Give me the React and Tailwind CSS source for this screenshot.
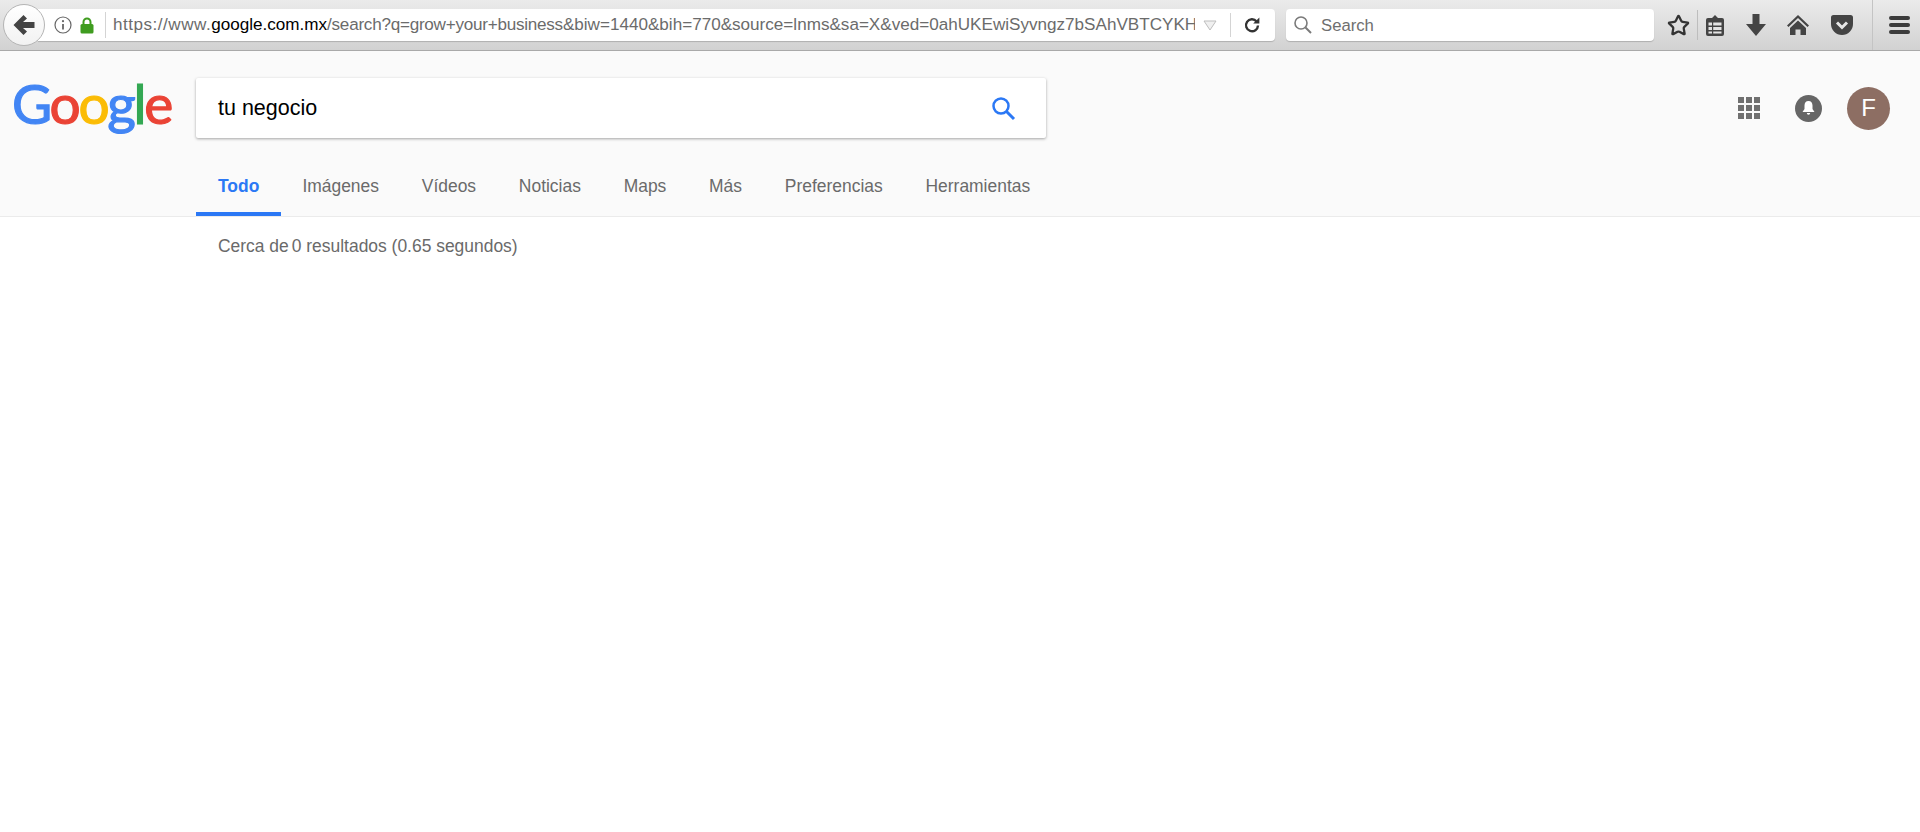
import { Star } from 'lucide-react';

const tabs = ['Imágenes', 'Vídeos', 'Noticias', 'Maps', 'Más', 'Preferencias', 'Herramientas'];

function BrowserBar() {
  return (
    <div className="flex h-[51px] items-center border-b border-[#a9a9a9] bg-gradient-to-b from-[#ebebeb] to-[#d2d2d2] pl-[3px]">
      {/* Back button */}
      <button className="z-10 -mr-[7px] flex h-[42px] w-[42px] shrink-0 items-center justify-center rounded-full border border-[#b5b5b5] bg-gradient-to-b from-white to-[#f2f2f2]">
        <svg width="22" height="20" viewBox="0 0 22 20" fill="#444">
          <path d="M10.5 0 L14 3.5 L10 7 H21.5 V13 H10 L14 16.500 L10.5 20 L0.5 10 Z" />
        </svg>
      </button>

      {/* URL bar */}
      <div className="flex h-[32px] w-[1237px] shrink-0 items-center rounded-r-[4px] bg-white pl-[16px] shadow-[0_1px_1px_rgba(0,0,0,0.18)]">
        <svg width="18" height="18" viewBox="0 0 18 18" fill="none" stroke="#666" className="shrink-0">
          <circle cx="9" cy="9" r="8" strokeWidth="1.2" />
          <circle cx="9" cy="5.2" r="1.1" fill="#666" stroke="none" />
          <path d="M9 8v5.5" strokeWidth="1.8" />
        </svg>
        <svg width="14" height="17" viewBox="0 0 14 17" className="ml-[8px] shrink-0">
          <path d="M3.5 8V5a3.5 3.5 0 0 1 7 0v3" fill="none" stroke="#3f9c1f" strokeWidth="2" />
          <rect x="0.5" y="7" width="13" height="9.5" rx="1.5" fill="#3f9c1f" />
        </svg>
        <div className="ml-[11px] h-[26px] w-px shrink-0 bg-[#d4d4d4]" />
        <div className="ml-[7px] w-[1082px] shrink-0 overflow-hidden whitespace-nowrap font-['Liberation_Sans',sans-serif] text-[17.1px] leading-[20px] text-[#6b6b6b]">
          <span className="tracking-[0.5px]">https://www.</span>
          <span className="text-black">google.com.mx</span>
          <span className="tracking-[-0.25px]">/search?q=grow+your+business</span>
          &amp;biw=1440&amp;bih=770&amp;source=lnms&amp;sa=X&amp;ved=0ahUKEwiSyvngz7bSAhVBTCYKHQ
        </div>
        <svg width="14" height="11" viewBox="0 0 14 11" className="ml-[8px] shrink-0">
          <path d="M1 1h12L7 10Z" fill="#f0f0f0" stroke="#bdbdbd" />
        </svg>
        <div className="ml-[13px] h-[24px] w-px shrink-0 bg-[#d4d4d4]" />
        <svg width="18" height="18" viewBox="0 0 18 18" fill="none" className="ml-[12px] shrink-0">
          <path d="M13.6 5.4A6 6 0 1 0 15 9.5" stroke="#333" strokeWidth="2.4" />
          <path d="M10.2 7.4 L16.4 7.4 L16.4 1.4 Z" fill="#333" />
        </svg>
      </div>

      {/* Search bar */}
      <div className="ml-[11px] flex h-[32px] w-[368px] shrink-0 items-center rounded-[4px] bg-white pl-[7px] shadow-[0_1px_1px_rgba(0,0,0,0.18)]">
        <svg width="20" height="20" viewBox="0 0 20 20" fill="none" stroke="#7a7a7a" strokeWidth="1.6" className="shrink-0">
          <circle cx="8" cy="8" r="6" />
          <path d="M12.5 12.5 18 18" strokeWidth="2" />
        </svg>
        <span className="ml-[8px] pt-[1px] font-['Liberation_Sans',sans-serif] text-[16.7px] text-[#6f6f6f]">Search</span>
      </div>

      {/* Toolbar icons */}
      <Star size={23} strokeWidth={2.4} color="#333" className="ml-[13px] shrink-0" />
      <div className="ml-[7px] h-[30px] w-px shrink-0 bg-[#bdbdbd]" />
      <svg width="20" height="23" viewBox="0 0 20 23" className="ml-[7px] shrink-0">
        <path d="M3 4h4l3-3 3 3h4a2 2 0 0 1 2 2v14a2 2 0 0 1-2 2H3a2 2 0 0 1-2-2V6a2 2 0 0 1 2-2Z" fill="#444" />
        <path d="M3.5 8.5h13v3h-13zM3.5 13h13v3h-13zM3.5 17.500h13v2h-13z" fill="#e4e4e4" />
        <path d="M7 7.500h1.200v12.500H7z" fill="#444" />
      </svg>
      <svg width="20" height="22" viewBox="0 0 20 22" fill="#444" className="ml-[21px] shrink-0">
        <path d="M6.500 0h7v10H20L10 22 0 10h6.500Z" />
      </svg>
      <svg width="22" height="22" viewBox="0 0 22 22" fill="#444" className="ml-[21px] shrink-0">
        <path d="M11 1 22 11.500l-1.500 1.500L11 4 1.500 13 0 11.500Z" />
        <path d="M11 6.500 19 14v7h-5.500v-5.500h-5V21H3v-7Z" />
      </svg>
      <svg width="22" height="22" viewBox="0 0 22 22" className="ml-[22px] shrink-0">
        <path d="M2.500 1h17A2.500 2.500 0 0 1 22 3.500V10A11 11 0 0 1 0 10V3.500A2.500 2.500 0 0 1 2.500 1Z" fill="#444" />
        <path d="M6 8.500l5 5 5-5" fill="none" stroke="#e6e6e6" strokeWidth="3" />
      </svg>
      <div className="ml-[19px] h-[50px] w-px shrink-0 bg-[#c4c4c4]" />
      <div className="ml-[16px] flex w-[21px] shrink-0 flex-col gap-[3px]">
        <div className="h-[4px] rounded-full bg-[#3c3c3c]" />
        <div className="h-[4px] rounded-full bg-[#3c3c3c]" />
        <div className="h-[4px] rounded-full bg-[#3c3c3c]" />
      </div>
    </div>
  );
}

function Logo() {
  return (
    <div className="-mt-[5px] w-[196px] shrink-0 pl-[12px] font-['Lato',sans-serif] text-[55px] leading-[60px] tracking-[-2.3px] [-webkit-text-stroke:1.2px]">
      <span className="text-[#4285f4]">G</span>
      <span className="text-[#ea4335]">o</span>
      <span className="text-[#fbbc05]">o</span>
      <span className="text-[#4285f4]">g</span>
      <span className="text-[#34a853]">l</span>
      <span className="text-[#ea4335]">e</span>
    </div>
  );
}

function HeaderActions() {
  return (
    <div className="ml-auto flex h-[60px] items-center pr-[30px]">
      <div className="grid grid-cols-3 gap-[2px]">
        {Array.from({ length: 9 }).map((_, i) => (
          <div key={i} className="h-[6px] w-[6px] bg-[#707070]" />
        ))}
      </div>
      <div className="ml-[35px] flex h-[27px] w-[27px] items-center justify-center rounded-full bg-[#666]">
        <svg width="15" height="16" viewBox="0 0 15 16" fill="white">
          <path d="M7.500 1C10.200 1 11.500 3 11.500 5.500V9L13.500 12H1.500L3.500 9V5.500C3.500 3 4.800 1 7.500 1Z" />
          <path d="M5.800 13h3.400a1.700 1.700 0 0 1-3.400 0Z" />
        </svg>
      </div>
      <div className="ml-[25px] flex h-[43px] w-[43px] items-center justify-center rounded-full bg-[#8d6e63] font-['Liberation_Sans',sans-serif] text-[24px] text-white">
        F
      </div>
    </div>
  );
}

export default function App() {
  return (
    <div className="h-[832px] overflow-hidden bg-white font-['Liberation_Sans',sans-serif]">
      <BrowserBar />

      <div className="h-[166px] border-b border-[#ebebeb] bg-[#fafafa]">
        <div className="flex items-start pt-[27px]">
          <Logo />
          {/* Search box */}
          <div className="flex h-[60px] w-[850px] items-center rounded-[2px] bg-white pl-[22px] pr-[30px] shadow-[0_1px_3px_rgba(0,0,0,0.35)]">
            <span className="text-[21.5px] text-black">tu negocio</span>
            <svg width="25" height="25" viewBox="0 0 25 25" fill="none" stroke="#2b78f5" className="ml-auto">
              <circle cx="10" cy="10" r="7.500" strokeWidth="2.500" />
              <path d="M15.500 15.500 23 23" strokeWidth="3" />
            </svg>
          </div>
          <HeaderActions />
        </div>

        {/* Tabs */}
        <div className="mt-[25px] flex pl-[196px] text-[17.45px] leading-[20px] text-[#6a6a6a]">
          <div className="h-[53px] w-[85px] border-b-4 border-[#2b78f5] pl-[22px] pt-[13px] font-bold text-[#2b78f5]">Todo</div>
          {tabs.map((tab) => (
            <div key={tab} className="h-[53px] px-[21.4px] pt-[13px]">
              {tab}
            </div>
          ))}
        </div>
      </div>

      <div className="pl-[218px] pt-[18px] text-[17.45px] leading-[22px] text-[#6a6a6a]">
        Cerca de<span className="ml-[3px]">0</span> resultados (0.65 segundos)
      </div>
    </div>
  );
}
